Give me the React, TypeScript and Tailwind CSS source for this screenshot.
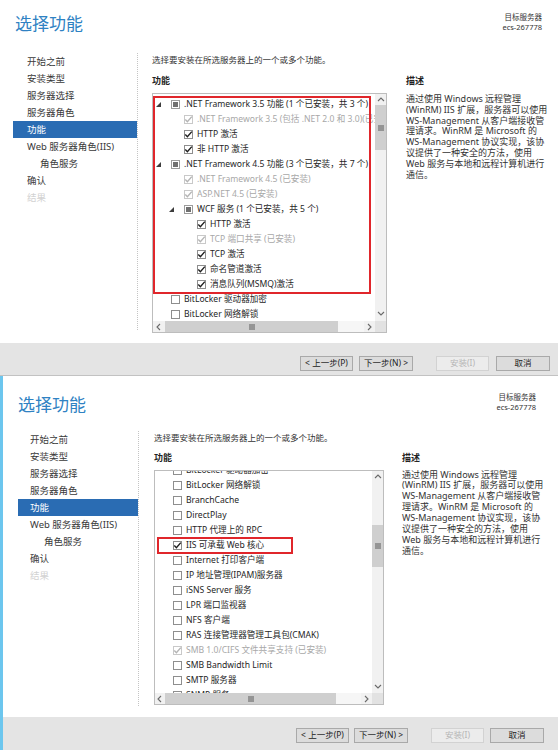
import React from "react";

type CS = "on" | "off" | "dis" | "tri";

function Box({ s }: { s: CS }) {
  if (s === "tri") {
    return (
      <span className="w-[9px] h-[9px] border border-[#9c9c9c] bg-white flex items-center justify-center shrink-0">
        <span className="w-[5px] h-[5px] bg-[#707070]" />
      </span>
    );
  }
  const border = s === "dis" ? "border-[#c9c9c9]" : "border-[#8e8e8e]";
  const stroke = s === "dis" ? "#b4b4b4" : "#1e1e1e";
  return (
    <span className={`w-[9px] h-[9px] border ${border} bg-white flex items-center justify-center shrink-0 overflow-visible`}>
      {s !== "off" && (
        <svg width="9" height="9" viewBox="0 0 9 9" className="overflow-visible">
          <path d="M1.3 4.6 L3.4 6.8 L7.8 1.6" fill="none" stroke={stroke} strokeWidth="1.4" />
        </svg>
      )}
    </span>
  );
}

function Tri() {
  return (
    <svg width="5" height="5" viewBox="0 0 5 5" className="-ml-[2px]">
      <polygon points="5,0 5,5 0,5" fill="#3c3c3c" />
    </svg>
  );
}

type Row = { lvl: number; exp?: boolean; s: CS; t: string; red?: boolean };

function ListRow({ r }: { r: Row }) {
  const pad = r.lvl === 0 ? "pl-[5px]" : r.lvl === 1 ? "pl-[18px]" : "pl-[31px]";
  const color = r.s === "dis" ? "text-[#a8a8a8]" : "text-[#262626]";
  return (
    <div className={`relative h-[15px] flex items-center whitespace-nowrap ${pad}`}>
      <span className="w-[13px] h-[15px] flex items-center shrink-0">{r.exp && <Tri />}</span>
      <Box s={r.s} />
      <span className={`ml-[4px] text-[8.6px] leading-[15px] ${color}`}>{r.t}</span>
      {r.red && <div className="absolute left-[2px] top-[-1px] w-[136px] h-[17px] border-2 border-[#e0262b]" />}
    </div>
  );
}

function Chev({ d }: { d: "u" | "d" | "l" | "r" }) {
  const p =
    d === "u" ? "M1 5 L4 2 L7 5" : d === "d" ? "M1 2 L4 5 L7 2" : d === "l" ? "M5 1 L2 4 L5 7" : "M2 1 L5 4 L2 7";
  return (
    <svg width="8" height="8" viewBox="0 0 8 8">
      <path d={p} fill="none" stroke="#6a6a6a" strokeWidth="1.1" />
    </svg>
  );
}

function VGrip() {
  return (
    <svg width="6" height="6" viewBox="0 0 6 6">
      <path d="M0 1 H6 M0 3 H6 M0 5 H6" stroke="#5a5a5a" strokeWidth="1" />
    </svg>
  );
}
function HGrip() {
  return (
    <svg width="6" height="6" viewBox="0 0 6 6">
      <path d="M1 0 V6 M3 0 V6 M5 0 V6" stroke="#5a5a5a" strokeWidth="1" />
    </svg>
  );
}

const topRows: Row[] = [
  { lvl: 0, exp: true, s: "tri", t: ".NET Framework 3.5 功能 (1 个已安装，共 3 个)" },
  { lvl: 1, s: "dis", t: ".NET Framework 3.5 (包括 .NET 2.0 和 3.0)(已安装)" },
  { lvl: 1, s: "on", t: "HTTP 激活" },
  { lvl: 1, s: "on", t: "非 HTTP 激活" },
  { lvl: 0, exp: true, s: "tri", t: ".NET Framework 4.5 功能 (3 个已安装，共 7 个)" },
  { lvl: 1, s: "dis", t: ".NET Framework 4.5 (已安装)" },
  { lvl: 1, s: "dis", t: "ASP.NET 4.5 (已安装)" },
  { lvl: 1, exp: true, s: "tri", t: "WCF 服务 (1 个已安装，共 5 个)" },
  { lvl: 2, s: "on", t: "HTTP 激活" },
  { lvl: 2, s: "dis", t: "TCP 端口共享 (已安装)" },
  { lvl: 2, s: "on", t: "TCP 激活" },
  { lvl: 2, s: "on", t: "命名管道激活" },
  { lvl: 2, s: "on", t: "消息队列(MSMQ)激活" },
];
const topRowsAfter: Row[] = [
  { lvl: 0, s: "off", t: "BitLocker 驱动器加密" },
  { lvl: 0, s: "off", t: "BitLocker 网络解锁" },
];

const botRows: Row[] = [
  { lvl: 0, s: "off", t: "BitLocker 驱动器加密" },
  { lvl: 0, s: "off", t: "BitLocker 网络解锁" },
  { lvl: 0, s: "off", t: "BranchCache" },
  { lvl: 0, s: "off", t: "DirectPlay" },
  { lvl: 0, s: "off", t: "HTTP 代理上的 RPC" },
  { lvl: 0, s: "on", t: "IIS 可承载 Web 核心", red: true },
  { lvl: 0, s: "off", t: "Internet 打印客户端" },
  { lvl: 0, s: "off", t: "IP 地址管理(IPAM)服务器" },
  { lvl: 0, s: "off", t: "iSNS Server 服务" },
  { lvl: 0, s: "off", t: "LPR 端口监视器" },
  { lvl: 0, s: "off", t: "NFS 客户端" },
  { lvl: 0, s: "off", t: "RAS 连接管理器管理工具包(CMAK)" },
  { lvl: 0, s: "dis", t: "SMB 1.0/CIFS 文件共享支持 (已安装)" },
  { lvl: 0, s: "off", t: "SMB Bandwidth Limit" },
  { lvl: 0, s: "off", t: "SMTP 服务器" },
  { lvl: 0, s: "off", t: "SNMP 服务" },
];

const desc = [
  "通过使用 Windows 远程管理",
  "(WinRM) IIS 扩展，服务器可以使用",
  "WS-Management 从客户端接收管",
  "理请求。WinRM 是 Microsoft 的",
  "WS-Management 协议实现，该协",
  "议提供了一种安全的方法，使用",
  "Web 服务与本地和远程计算机进行",
  "通信。",
];

const nav = ["开始之前", "安装类型", "服务器选择", "服务器角色", "功能", "Web 服务器角色(IIS)", "角色服务", "确认", "结果"];

function Nav({ top }: { top: boolean }) {
  return (
    <div className={top ? "ml-[13px] w-[124px] shrink-0" : "ml-[15px] w-[120px] shrink-0"}>
      {nav.map((n, i) => {
        const sel = i === 4;
        const sub = i === 6;
        const dis = i === 8;
        const pl = top ? (sub ? "pl-[27px]" : "pl-[14px]") : sub ? "pl-[26px]" : "pl-[12px]";
        const col = sel ? "bg-[#2a6cb3] text-white" : dis ? "text-[#d2d2d2]" : "text-[#3a3a3a]";
        return (
          <div key={i} className={`h-[17px] leading-[17px] text-[9.5px] whitespace-nowrap ${pl} ${col}`}>
            {n}
          </div>
        );
      })}
    </div>
  );
}

function Footer({ top }: { top: boolean }) {
  const btn = "h-[15px] flex items-center justify-center text-[8.5px] border bg-[#dcdcdc] border-[#a9a9a9] text-[#222]";
  return (
    <div className={top ? "h-[32px] bg-[#e4e4e4] flex justify-end items-start pt-[13px] pr-[8px]" : "h-[33px] bg-[#e4e4e4] flex justify-end items-start pt-[11px] pr-[14px]"}>
      <div className={`${btn} w-[53px]`}>&lt; 上一步(P)</div>
      <div className={`${btn} w-[54px] ${top ? "ml-[6px]" : "ml-[5px]"}`}>下一步(N) &gt;</div>
      <div className="h-[15px] w-[53px] ml-[23px] flex items-center justify-center text-[8.5px] border border-[#d2d2d2] bg-[#ececec] text-[#b5b5b5]">安装(I)</div>
      <div className={`${btn} w-[54px] ${top ? "ml-[7px]" : "ml-[6px]"}`}>取消</div>
    </div>
  );
}

function Header({ top }: { top: boolean }) {
  return (
    <div className={top ? "h-[53px] flex justify-between" : "h-[55px] flex justify-between"}>
      <div className={top ? "pl-[15px] pt-[14px] text-[17px] leading-[20px] text-[#2f82c3]" : "pl-[15px] pt-[19px] text-[17px] leading-[20px] text-[#2f82c3]"}>
        选择功能
      </div>
      <div className={top ? "pr-[16px] pt-[12px] text-right text-[7.5px] leading-[10px] text-[#333]" : "pr-[22px] pt-[17px] text-right text-[7.5px] leading-[9.5px] text-[#333]"}>
        <div>目标服务器</div>
        <div>ecs-267778</div>
      </div>
    </div>
  );
}

function TopList() {
  return (
    <div className="mt-[6px] h-[240px] w-[235px] border border-[#bdbdbd] bg-white flex flex-col">
      <div className="flex-1 flex min-h-0">
        <div className="flex-1 overflow-hidden pt-[3px]">
          <div className="relative">
            {topRows.map((r, i) => (
              <ListRow key={i} r={r} />
            ))}
            <div className="absolute left-0 top-[-1px] w-[218px] h-[198px] border-2 border-[#e0262b]" />
          </div>
          {topRowsAfter.map((r, i) => (
            <ListRow key={i} r={r} />
          ))}
        </div>
        <div className="w-[11px] flex flex-col bg-[#f1f1f1]">
          <div className="h-[11px] flex items-center justify-center">
            <Chev d="u" />
          </div>
          <div className="h-[45px] bg-[#cfcfcf] flex items-center justify-center">
            <VGrip />
          </div>
          <div className="flex-1" />
          <div className="h-[14px] flex items-center justify-center">
            <Chev d="d" />
          </div>
        </div>
      </div>
      <div className="h-[11px] flex shrink-0">
        <div className="w-[12px] flex items-center justify-center bg-[#f1f1f1]">
          <Chev d="l" />
        </div>
        <div className="w-[173px] bg-[#cfcfcf] flex items-center justify-center">
          <HGrip />
        </div>
        <div className="flex-1 bg-[#f6f6f6]" />
        <div className="w-[11px] flex items-center justify-center bg-[#f1f1f1]">
          <Chev d="r" />
        </div>
        <div className="w-[11px] bg-[#e2e2e2]" />
      </div>
    </div>
  );
}

function BotList() {
  return (
    <div className="mt-[6px] h-[235px] w-[230px] border border-[#bdbdbd] bg-white flex flex-col">
      <div className="flex-1 flex min-h-0">
        <div className="flex-1 overflow-hidden">
          <div className="mt-[-8px]">
            {botRows.map((r, i) => (
              <ListRow key={i} r={r} />
            ))}
          </div>
        </div>
        <div className="w-[11px] flex flex-col bg-[#f1f1f1]">
          <div className="h-[12px] flex items-center justify-center">
            <Chev d="u" />
          </div>
          <div className="h-[42px]" />
          <div className="h-[42px] bg-[#cfcfcf] flex items-center justify-center">
            <VGrip />
          </div>
          <div className="flex-1" />
          <div className="h-[12px] flex items-center justify-center">
            <Chev d="d" />
          </div>
        </div>
      </div>
      <div className="h-[11px] flex shrink-0">
        <div className="w-[10px] flex items-center justify-center bg-[#f1f1f1]">
          <Chev d="l" />
        </div>
        <div className="w-[171px] bg-[#cfcfcf] flex items-center justify-center">
          <HGrip />
        </div>
        <div className="flex-1 bg-[#f6f6f6]" />
        <div className="w-[11px] flex items-center justify-center bg-[#f1f1f1]">
          <Chev d="r" />
        </div>
        <div className="w-[11px] bg-[#e2e2e2]" />
      </div>
    </div>
  );
}

function Desc({ top }: { top: boolean }) {
  return (
    <div className={top ? "ml-[19px] pt-[22px] w-[140px]" : "ml-[18px] pt-[21px] w-[136px]"}>
      <div className="text-[9px] leading-[12px] font-bold text-[#222]">描述</div>
      <div className={top ? "mt-[7px]" : "mt-[5.5px]"}>
        {desc.map((l, i) => (
          <div key={i} className={`whitespace-nowrap text-[9px] text-[#333] ${top ? "leading-[10.8px]" : "leading-[10.9px]"}`}>
            {l}
          </div>
        ))}
      </div>
    </div>
  );
}

function Panel({ top }: { top: boolean }) {
  return (
    <div className={top ? "h-[375px] bg-white flex flex-col" : "h-[374px] bg-white flex flex-col border-l-[3px] border-[#6cc6ee]"}>
      <Header top={top} />
      <div className={top ? "h-[290px] flex" : "h-[286px] flex"}>
        <Nav top={top} />
        <div className={top ? "w-0 h-[277px] border-l border-dotted border-[#c4c4c4]" : "w-0 h-[275px] border-l border-dotted border-[#c4c4c4]"} />
        <div className={top ? "pl-[14px] shrink-0" : "pl-[15px] shrink-0"}>
          <div className="pt-[1px] text-[8.5px] leading-[12px] whitespace-nowrap text-[#333]">
            选择要安装在所选服务器上的一个或多个功能。
          </div>
          <div className={`text-[9px] leading-[12px] font-bold text-[#222] ${top ? "mt-[9px]" : "mt-[8px]"}`}>功能</div>
          {top ? <TopList /> : <BotList />}
        </div>
        <Desc top={top} />
      </div>
      <Footer top={top} />
    </div>
  );
}

export default function App() {
  return (
    <div className="w-[558px] h-[750px] overflow-hidden bg-white font-['Noto_Sans','Noto_Sans_CJK_SC',sans-serif]">
      <Panel top={true} />
      <div className="h-px bg-[#c2c2c2]" />
      <Panel top={false} />
    </div>
  );
}
